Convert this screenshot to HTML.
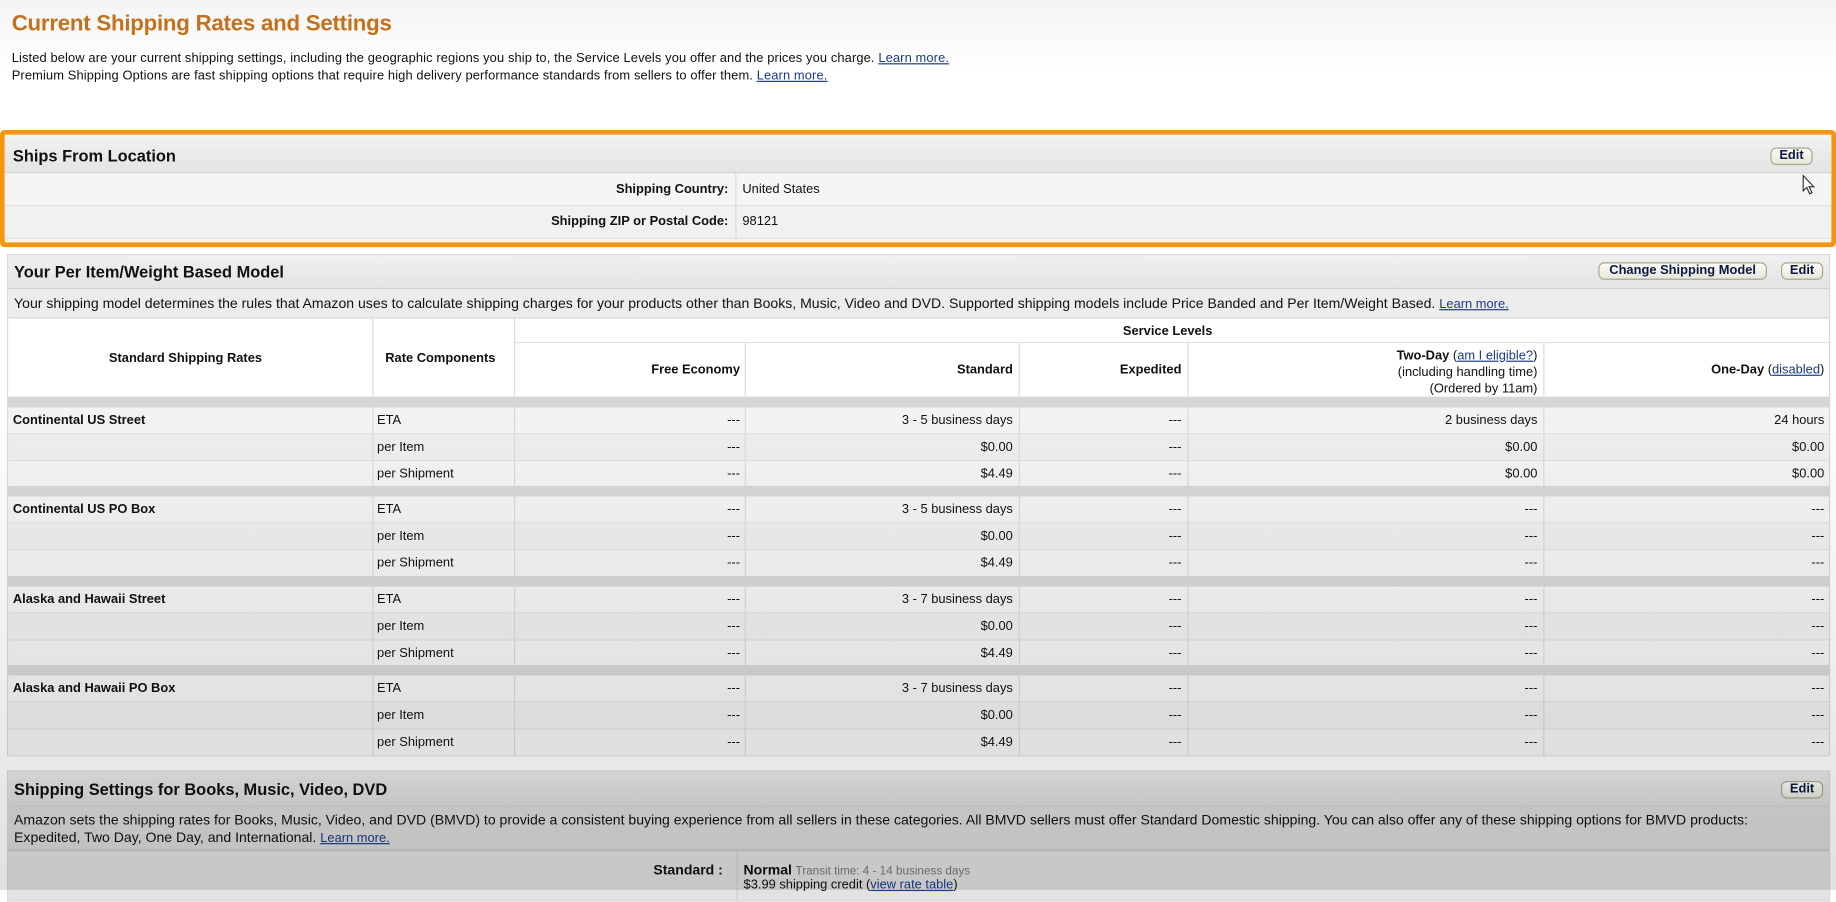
<!DOCTYPE html>
<html><head><meta charset="utf-8"><style>
html,body{margin:0;padding:0;width:1836px;height:890px;overflow:hidden;background:#fff}
#w{position:absolute;left:0;top:0;width:1568px;height:760px;transform:scale(1.17092);transform-origin:0 0;font-family:"Liberation Sans",sans-serif;font-size:11px;color:#111;background:linear-gradient(#f4f4f4,#fff 60px)}
.a{position:absolute;white-space:nowrap}
a{color:#1a3a8a;text-decoration:underline}
h1{position:absolute;left:10px;top:10px;margin:0;font-size:19px;color:#c4701c;font-weight:bold;letter-spacing:-0.2px}
.box{position:absolute;background:#f2f2f2;border:1px solid #d8d8d8}
.hd{position:absolute;left:0;right:0;background:linear-gradient(#f0f0f0,#e4e4e4);border-bottom:1px solid #cfcfcf;font-weight:bold;font-size:14px}
.btn{position:absolute;border:1px solid #a8a890;border-radius:5px;background:linear-gradient(#fdfdf6,#e6e6dc);font-weight:bold;font-size:11px;color:#0a1a44;text-align:center;line-height:13px;height:13px}
.r{position:absolute;left:0;right:0;border-bottom:1px solid #e0e0e0}
.sep{position:absolute;left:0;right:0;background:#d7d7d7}
.vl{position:absolute;width:1px;background:#dadada}
.t{position:absolute;white-space:nowrap}
.b{font-weight:bold}
.rt{text-align:right}
</style></head><body><div id="w">
<h1>Current Shipping Rates and Settings</h1>
<div class="a" style="left:10px;top:44px;letter-spacing:0.1px">Listed below are your current shipping settings, including the geographic regions you ship to, the Service Levels you offer and the prices you charge. <a>Learn more.</a></div>
<div class="a" style="left:10px;top:59px;letter-spacing:0.1px">Premium Shipping Options are fast shipping options that require high delivery performance standards from sellers to offer them. <a>Learn more.</a></div>

<div style="position:absolute;left:0;top:111px;width:1560px;height:92px;border:4px solid #f3960d;border-radius:4px;background:#f4f4f4">
 <div class="hd" style="top:3px;height:29px"><span class="t" style="left:7px;top:7px">Ships From Location</span></div>
 <div class="btn" style="left:1508px;top:11px;width:34px">Edit</div>
 <div class="r" style="top:33px;height:27px;background:#f5f5f5"></div>
 <div class="r" style="top:61px;height:27px;background:#f1f1f1"></div>
 <div class="vl" style="left:624px;top:33px;height:56px"></div>
 <span class="t b" style="right:942px;top:41px">Shipping Country:</span>
 <span class="t" style="left:630px;top:41px">United States</span>
 <span class="t b" style="right:942px;top:68px">Shipping ZIP or Postal Code:</span>
 <span class="t" style="left:630px;top:68px">98121</span>
</div>

<div class="box" style="left:6px;top:217px;width:1555px;height:426px;background:#f3f3f3">
 <div class="hd" style="top:0;height:28px"><span class="t" style="left:5px;top:6px">Your Per Item/Weight Based Model</span></div>
 <div class="btn" style="left:1358px;top:6px;width:142px">Change Shipping Model</div>
 <div class="btn" style="left:1514px;top:6px;width:34px">Edit</div>
 <div style="position:absolute;left:0;right:0;top:29px;height:24px;background:#ececec;border-bottom:1px solid #d6d6d6"><span class="t" style="left:5px;top:5px;font-size:12px">Your shipping model determines the rules that Amazon uses to calculate shipping charges for your products other than Books, Music, Video and DVD. Supported shipping models include Price Banded and Per Item/Weight Based. <a style="font-size:11px">Learn more.</a></span></div>
 <div style="position:absolute;left:0;right:0;top:54px;height:66px;background:#fff"></div>
 <div style="position:absolute;left:432px;right:0;top:74px;height:1px;background:#e0e0e0"></div>
 <div class="vl" style="left:311px;top:54px;height:66px"></div>
 <div class="vl" style="left:432px;top:54px;height:66px"></div>
 <div class="vl" style="left:629px;top:75px;height:45px"></div>
 <div class="vl" style="left:863px;top:75px;height:45px"></div>
 <div class="vl" style="left:1007px;top:75px;height:45px"></div>
 <div class="vl" style="left:1311px;top:75px;height:45px"></div>
 <span class="t b" style="left:86px;top:82px">Standard Shipping Rates</span>
 <span class="t b" style="left:322px;top:82px">Rate Components</span>
 <span class="t b" style="left:952px;top:59px">Service Levels</span>
 <span class="t b" style="right:930px;top:92px">Free Economy</span>
 <span class="t b" style="right:697px;top:92px">Standard</span>
 <span class="t b" style="right:553px;top:92px">Expedited</span>
 <span class="t rt" style="right:249px;top:79px;line-height:14px"><b>Two-Day</b> (<a>am I eligible?</a>)<br>(including handling time)<br>(Ordered by 11am)</span>
 <span class="t" style="right:4px;top:92px"><b>One-Day</b> (<a>disabled</a>)</span>
 <div id="rows"></div>
</div>

<div class="box" style="left:6px;top:658px;width:1555px;height:110px;background:#e2e2e2">
 <div class="hd" style="top:0;height:29px;background:linear-gradient(#e8e8e8,#dcdcdc)"><span class="t" style="left:5px;top:7px">Shipping Settings for Books, Music, Video, DVD</span></div>
 <div class="btn" style="left:1514px;top:8px;width:34px">Edit</div>
 <div style="position:absolute;left:0;right:0;top:30px;height:36px;background:#dadada;border-bottom:2px solid #cacaca"><span class="t" style="left:5px;top:4px;line-height:15px;font-size:12px">Amazon sets the shipping rates for Books, Music, Video, and DVD (BMVD) to provide a consistent buying experience from all sellers in these categories. All BMVD sellers must offer Standard Domestic shipping. You can also offer any of these shipping options for BMVD products:<br>Expedited, Two Day, One Day, and International. <a style="font-size:11px">Learn more.</a></span></div>
 <span class="t b" style="left:551px;top:77px;font-size:12px">Standard :</span>
 <div class="vl" style="left:622px;top:68px;height:42px;background:#cfcfcf"></div>
 <span class="t" style="left:628px;top:77px"><b style="font-size:12px">Normal</b> <span style="color:#777;font-size:10px">Transit time: 4 - 14 business days</span></span>
 <span class="t" style="left:628px;top:91px">$3.99 shipping credit (<a>view rate table</a>)</span>
</div>
<div style="position:absolute;left:0;top:0;width:1568px;height:760px;pointer-events:none;background:linear-gradient(rgba(0,0,0,0) 330px,rgba(0,0,0,0.04) 480px,rgba(0,0,0,0.12) 760px)"></div>
<svg style="position:absolute;left:1539px;top:149px" width="12" height="18" viewBox="0 0 12 18"><path d="M1 1 L1 14 L4 11 L6.5 16.5 L8.5 15.5 L6 10.5 L10 10.5 Z" fill="#fff" stroke="#333" stroke-width="1"/></svg>
</div>
<script>
var g=[["Continental US Street",[["ETA","---","3 - 5 business days","---","2 business days","24 hours"],["per Item","---","$0.00","---","$0.00","$0.00"],["per Shipment","---","$4.49","---","$0.00","$0.00"]]],
["Continental US PO Box",[["ETA","---","3 - 5 business days","---","---","---"],["per Item","---","$0.00","---","---","---"],["per Shipment","---","$4.49","---","---","---"]]],
["Alaska and Hawaii Street",[["ETA","---","3 - 7 business days","---","---","---"],["per Item","---","$0.00","---","---","---"],["per Shipment","---","$4.49","---","---","---"]]],
["Alaska and Hawaii PO Box",[["ETA","---","3 - 7 business days","---","---","---"],["per Item","---","$0.00","---","---","---"],["per Shipment","---","$4.49","---","---","---"]]]];
var tops=[130,206,283,359],h="",rights=[930,697,553,249,4],vls=[311,432,629,863,1007,1311];
for(var i=0;i<4;i++){var T=tops[i];h+='<div class="sep" style="top:'+(T-9)+'px;height:9px"></div>';
for(var j=0;j<3;j++){var y=T+j*23,rw=g[i][1][j];
h+='<div class="r" style="top:'+y+'px;height:22px;background:'+(j%2?'#efefef':'#f4f4f4')+'"></div>';
for(var k=0;k<vls.length;k++)h+='<div class="vl" style="left:'+vls[k]+'px;top:'+y+'px;height:23px"></div>';
if(j==0)h+='<span class="t b" style="left:4px;top:'+(y+5)+'px">'+g[i][0]+'</span>';
h+='<span class="t" style="left:315px;top:'+(y+5)+'px">'+rw[0]+'</span>';
for(var k=1;k<6;k++)h+='<span class="t" style="right:'+rights[k-1]+'px;top:'+(y+5)+'px">'+rw[k]+'</span>';}}
document.getElementById('rows').outerHTML=h;
</script>
</div></body></html>
